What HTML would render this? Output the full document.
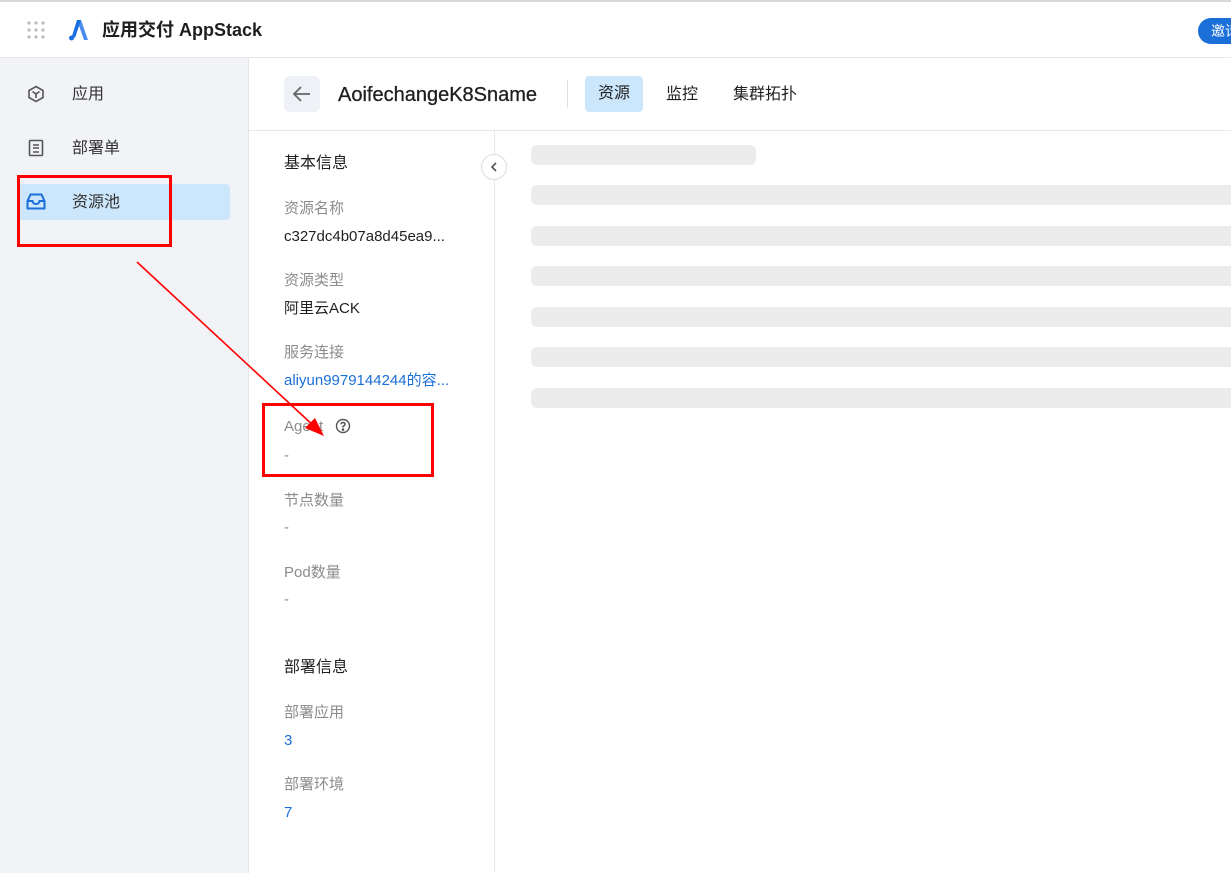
<!DOCTYPE html>
<html><head><meta charset="utf-8"><style>
*{margin:0;padding:0;box-sizing:border-box}
body{width:1231px;height:873px;overflow:hidden;background:#fff;font-family:"Liberation Sans","Noto Sans CJK SC",sans-serif;position:relative;color:#1f1f1f}
.top{position:absolute;left:0;top:0;width:1231px;height:58px;border-top:2px solid #d9d9d9;border-bottom:1px solid #e8e8e8;background:#fff}
.side{position:absolute;left:0;top:58px;width:249px;height:815px;background:#f1f3f6;border-right:1px solid #e5e5e5}
.abs{position:absolute}
.nav{position:absolute;left:72px;font-size:16px;color:#333;line-height:20px}
.lbl{position:absolute;left:284px;font-size:15px;color:#8c8c8c;line-height:20px}
.val{position:absolute;left:284px;font-size:15px;color:#1f1f1f;line-height:20px}
.h{position:absolute;left:284px;font-size:16px;color:#1f1f1f;line-height:20px}
.sk{position:absolute;left:531px;height:20px;background:#ececec;border-radius:6px;width:720px}
</style></head><body>
<div class="top">
 <svg class="abs" style="left:27px;top:19px" width="18" height="18"><g fill="#bbb"><circle cx="2" cy="2" r="1.6"/><circle cx="9" cy="2" r="1.6"/><circle cx="16" cy="2" r="1.6"/><circle cx="2" cy="9" r="1.6"/><circle cx="9" cy="9" r="1.6"/><circle cx="16" cy="9" r="1.6"/><circle cx="2" cy="16" r="1.6"/><circle cx="9" cy="16" r="1.6"/><circle cx="16" cy="16" r="1.6"/></g></svg>
 <svg class="abs" style="left:68px;top:16px" width="22" height="24"><path d="M9 2 L13 2 L20 22 L16 22 Z" fill="#4a8dee"/><path d="M9 2 L13 2 L7 20 L4 18Z" fill="#1a6fe0"/><circle cx="3.5" cy="20" r="2.5" fill="#1a6fe0"/></svg>
 <div class="abs" style="left:102px;top:16px;font-size:18px;font-weight:bold;color:#1f1f1f;line-height:24px">应用交付 AppStack</div>
 <div class="abs" style="left:1198px;top:16px;width:50px;height:26px;border-radius:13px;background:#1b6fd8;color:#fff;font-size:14px;line-height:26px;padding-left:13px">邀请</div>
</div>
<div class="side"></div>
<svg class="abs" style="left:27px;top:85px" width="18" height="18" fill="none" stroke="#555" stroke-width="1.6"><path d="M9 1.5 L16 5.5 L16 12.5 L9 16.5 L2 12.5 L2 5.5Z"/><path d="M5.5 6.5 L9 9 L12.5 6.5 M9 9 V13"/></svg>
<div class="nav" style="top:85px">应用</div>
<svg class="abs" style="left:28px;top:139px" width="16" height="18" fill="none" stroke="#555" stroke-width="1.6"><rect x="1.5" y="1.5" width="13" height="15" rx="1"/><path d="M5 6h6M5 9h6M5 13h6"/></svg>
<div class="nav" style="top:139px">部署单</div>
<div class="abs" style="left:17px;top:184px;width:213px;height:36px;background:#cce6fb;border-radius:4px"></div>
<svg class="abs" style="left:26px;top:193px" width="20" height="17" fill="none" stroke="#1b6fd8" stroke-width="2"><path d="M1.5 8 L4.5 1.5 H15.5 L18.5 8 V15.5 H1.5Z M1.5 8 H6.5 Q7 11 10 11 Q13 11 13.5 8 H18.5"/></svg>
<div class="nav" style="top:193px">资源池</div>
<div class="abs" style="left:17px;top:175px;width:155px;height:72px;border:3px solid #f00"></div>

<div class="abs" style="left:249px;top:130px;width:982px;border-top:1px solid #e8e8e8"></div>
<div class="abs" style="left:494px;top:130px;height:743px;border-left:1px solid #e8e8e8"></div>
<div class="abs" style="left:284px;top:76px;width:36px;height:36px;background:#eef1f5;border-radius:6px"></div>
<svg class="abs" style="left:292px;top:85px" width="20" height="18" fill="none" stroke="#666" stroke-width="1.8"><path d="M18 9H2M9 2L2 9L9 16"/></svg>
<div class="abs" style="left:338px;top:82px;font-size:20px;color:#1f1f1f;line-height:26px;font-weight:500;-webkit-text-stroke:0.3px #1f1f1f">AoifechangeK8Sname</div>
<div class="abs" style="left:567px;top:80px;height:28px;border-left:1px solid #e0e0e0"></div>
<div class="abs" style="left:585px;top:76px;width:58px;height:36px;background:#cce6fb;border-radius:4px;font-size:16px;line-height:36px;text-align:center">资源</div>
<div class="abs" style="left:666px;top:85px;font-size:16px;line-height:20px">监控</div>
<div class="abs" style="left:733px;top:85px;font-size:16px;line-height:20px">集群拓扑</div>

<div class="abs" style="left:481px;top:154px;width:26px;height:26px;border:1px solid #ddd;border-radius:50%;background:#fff"></div>
<svg class="abs" style="left:489px;top:161px" width="10" height="12" fill="none" stroke="#555" stroke-width="1.6"><path d="M7 2L3 6L7 10"/></svg>

<div class="h" style="top:154px">基本信息</div>
<div class="lbl" style="top:199px">资源名称</div>
<div class="val" style="top:227px">c327dc4b07a8d45ea9...</div>
<div class="lbl" style="top:271px">资源类型</div>
<div class="val" style="top:299px">阿里云ACK</div>
<div class="lbl" style="top:343px">服务连接</div>
<div class="val" style="top:371px;color:#1b6fd8">aliyun9979144244的容...</div>
<div class="lbl" style="top:417px">Agent</div>
<svg class="abs" style="left:335px;top:418px" width="16" height="16" fill="none" stroke="#555" stroke-width="1.4"><circle cx="8" cy="8" r="6.5"/><path d="M6 6.3Q6 4.5 8 4.5Q10 4.5 10 6.2Q10 7.5 8 8.3V9.5"/><circle cx="8" cy="11.6" r=".6" fill="#555"/></svg>
<div class="lbl" style="top:446px">-</div>
<div class="lbl" style="top:491px">节点数量</div>
<div class="lbl" style="top:518px">-</div>
<div class="lbl" style="top:563px">Pod数量</div>
<div class="lbl" style="top:590px">-</div>
<div class="h" style="top:658px">部署信息</div>
<div class="lbl" style="top:703px">部署应用</div>
<div class="val" style="top:731px;color:#1b6fd8">3</div>
<div class="lbl" style="top:775px">部署环境</div>
<div class="val" style="top:803px;color:#1b6fd8">7</div>
<div class="abs" style="left:262px;top:403px;width:172px;height:74px;border:3px solid #f00"></div>

<div class="sk" style="top:145px;width:225px"></div>
<div class="sk" style="top:185px"></div>
<div class="sk" style="top:226px"></div>
<div class="sk" style="top:266px"></div>
<div class="sk" style="top:307px"></div>
<div class="sk" style="top:347px"></div>
<div class="sk" style="top:388px"></div>

<svg class="abs" style="left:0;top:0" width="1231" height="873"><line x1="137" y1="262" x2="316" y2="428" stroke="#f00" stroke-width="1.6"/><path d="M324 436 L305 428 L315 418Z" fill="#f00"/></svg>
</body></html>
